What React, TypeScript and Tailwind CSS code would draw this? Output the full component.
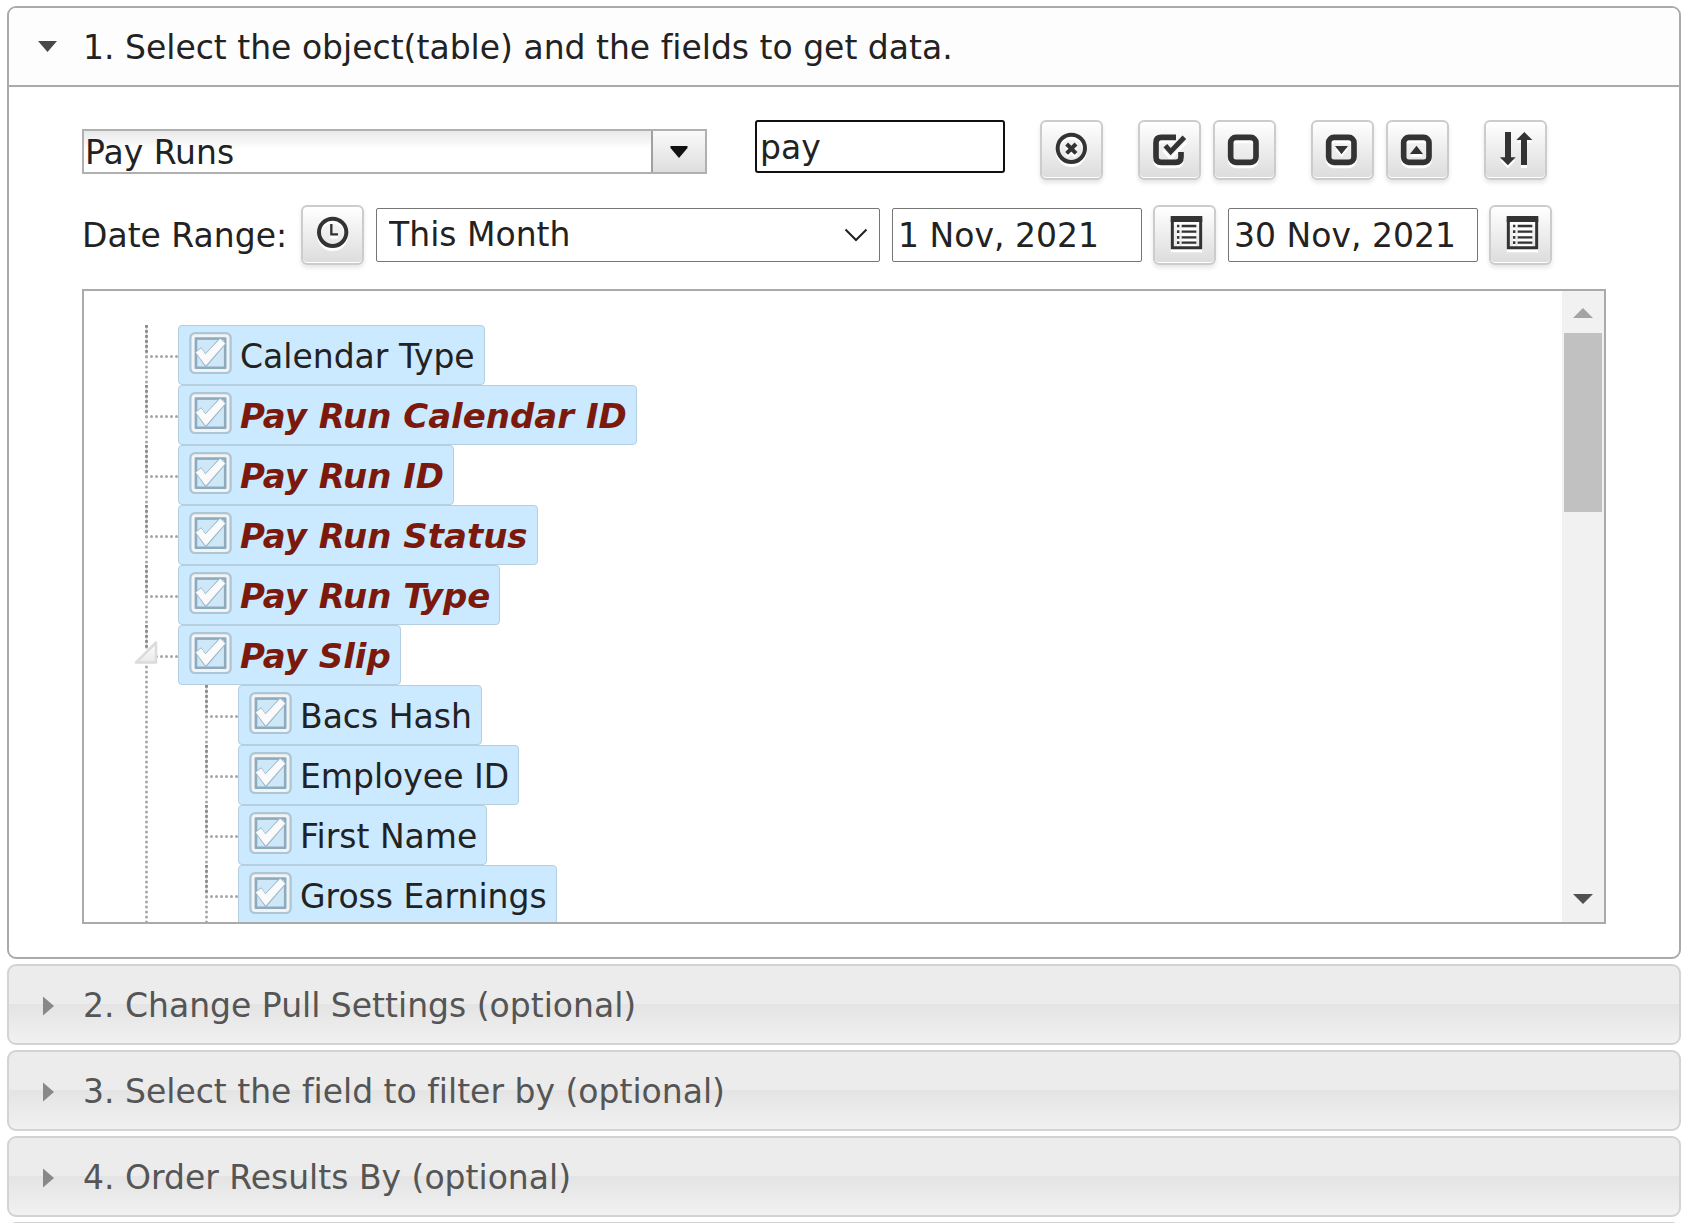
import { useState } from "react";
import type { ReactNode } from "react";

interface TreeNode {
  label: string;
  depth: 1 | 2;
  match?: boolean;
  open?: boolean;
}

const nodes: TreeNode[] = [
  { label: "Calendar Type", depth: 1 },
  { label: "Pay Run Calendar ID", depth: 1, match: true },
  { label: "Pay Run ID", depth: 1, match: true },
  { label: "Pay Run Status", depth: 1, match: true },
  { label: "Pay Run Type", depth: 1, match: true },
  { label: "Pay Slip", depth: 1, match: true, open: true },
  { label: "Bacs Hash", depth: 2 },
  { label: "Employee ID", depth: 2 },
  { label: "First Name", depth: 2 },
  { label: "Gross Earnings", depth: 2 },
];

const closedSections = [
  "2. Change Pull Settings (optional)",
  "3. Select the field to filter by (optional)",
  "4. Order Results By (optional)",
];

function IconButton({ label, children }: { label: string; children: ReactNode }) {
  return (
    <button
      type="button"
      aria-label={label}
      className="h-[60px] w-[63px] shrink-0 cursor-pointer rounded-md border-2 border-[#cccccc] bg-linear-to-b from-white to-[#dcdcdc] shadow-[0_3px_4px_rgba(0,0,0,0.1),inset_0_-1px_0_#fff]"
    >
      <svg
        viewBox="0 0 177 168"
        className="h-full w-full fill-none stroke-[#333333] drop-shadow-[0_3px_0_#ffffff]"
      >
        {children}
      </svg>
    </button>
  );
}

function SquareOutline() {
  return <rect x="47" y="46" width="76" height="75" rx="16" strokeWidth="17" />;
}

function CalendarIcon() {
  return (
    <>
      <path d="M52 36V122H137V36" strokeWidth="9" />
      <path d="M47 36H142" strokeWidth="18" />
      <path d="M66 57H73M66 74H73M66 91H73M66 107H73" strokeWidth="8" />
      <path d="M80 57H124M80 74H124M80 91H124M80 107H124" strokeWidth="7" />
    </>
  );
}

// Dotted guide lines drawn to the left of a tree node
function Connector({ depth, open }: { depth: 1 | 2; open?: boolean }) {
  const width = depth === 1 ? 44 : 104;
  const x = depth === 1 ? 12.5 : 72.5;
  return (
    <svg width={width} height="60" className="shrink-0 fill-none" aria-hidden="true">
      <g stroke="#a6a6a6" strokeWidth="3" strokeLinecap="round" strokeDasharray="0 5">
        {depth === 2 && <path d="M12.5 2V60" />}
        <path d={`M${x} 2V60`} />
        <path d={`M${x} 31.5H${width}`} />
        <path d={`M${x} 1V31`} stroke="#8a8a8a" />
      </g>
      {open && (
        <>
          <rect x="5" y="24" width="18" height="16" fill="#fff" stroke="none" />
          <path
            d="M22 17.5V37.5H2Z"
            fill="url(#toggle)"
            stroke="#dcdcdc"
            strokeWidth="2.5"
            strokeLinejoin="round"
          />
          <defs>
            <linearGradient id="toggle" x1="0" y1="0" x2="0" y2="1">
              <stop offset="0" stopColor="#fff" />
              <stop offset="1" stopColor="#e9e9e9" />
            </linearGradient>
          </defs>
        </>
      )}
    </svg>
  );
}

function CheckMark({ checked }: { checked: boolean }) {
  return (
    <svg width="43" height="43" viewBox="0 0 43 43" className="shrink-0" aria-hidden="true">
      <rect x="2" y="2.8" width="39" height="38.6" rx="4" fill="none" stroke="#aec5d3" strokeWidth="3.5" />
      <rect x="6.8" y="7.4" width="29.6" height="29.6" fill="#cfe8f8" stroke="#8dabbf" strokeWidth="3" />
      <rect x="4" y="4.8" width="35" height="34.6" rx="2.5" fill="none" stroke="#f1f3f5" strokeWidth="3" />
      {checked && (
        <>
          <path
            d="M7.2 21.5L12 17.5L16.3 24L31 8L36 12.5L16.8 35Z"
            fill="#9db8ca"
            stroke="#9db8ca"
            strokeWidth="2"
            strokeLinejoin="round"
          />
          <path
            d="M7.8 21.5L12 18.2L16.3 24.5L31.2 8.8L35.2 12.5L16.8 33.6Z"
            fill="#fafafa"
            stroke="#fafafa"
            strokeWidth="1.4"
            strokeLinejoin="round"
          />
        </>
      )}
    </svg>
  );
}

function TreeRow({ node }: { node: TreeNode }) {
  const [checked, setChecked] = useState(true);
  return (
    <li className="flex">
      <Connector depth={node.depth} open={node.open} />
      <label className="flex h-[60px] cursor-pointer items-start rounded-[4px] border border-[#b5cfde] bg-[#cbe9ff] pt-[5px] pr-[9px] pl-[10px]">
        <input
          type="checkbox"
          checked={checked}
          onChange={(e) => setChecked(e.target.checked)}
          className="sr-only"
        />
        <CheckMark checked={checked} />
        <span
          className={
            node.match
              ? "pl-2 text-[34px] leading-[50px] font-bold text-[#7b190d] italic"
              : "pl-2 leading-[52px]"
          }
        >
          {node.label}
        </span>
      </label>
    </li>
  );
}

export default function App() {
  const [table, setTable] = useState("Pay Runs");
  const [search, setSearch] = useState("pay");
  const [from, setFrom] = useState("1 Nov, 2021");
  const [to, setTo] = useState("30 Nov, 2021");

  return (
    <div className="flex h-screen flex-col gap-[5px] overflow-hidden bg-white pt-[6px] pr-[6px] pl-[7px] font-['DejaVu_Sans',sans-serif] text-[33px] leading-[40px] whitespace-nowrap text-[#222222] [font-variant-ligatures:none]">
      <section className="shrink-0 rounded-[9px] border-2 border-[#aaaaaa]">
        <h2>
          <button
            type="button"
            aria-expanded="true"
            className="flex h-[79px] w-full cursor-pointer items-center gap-[23px] rounded-t-[7px] border-b-2 border-[#aaaaaa] bg-[#fdfdfd] pt-0.5 pl-[27px]"
          >
            <svg width="24" height="24" viewBox="0 0 24 24" aria-hidden="true">
              <path d="M2 5H21L11.5 16Z" fill="#484848" />
            </svg>
            1. Select the object(table) and the fields to get data.
          </button>
        </h2>

        <div className="px-[73px] pt-[33px] pb-[33px]">
          <div className="flex items-start">
            <div className="mt-[9px] flex h-[45px] w-[625px] border-2 border-[#b0b0b0]">
              <input
                type="text"
                aria-label="Object"
                value={table}
                onChange={(e) => setTable(e.target.value)}
                className="min-w-0 flex-1 bg-linear-to-b from-[#e9e9e9] to-white to-45% pt-0.5 pl-px outline-none"
              />
              <button
                type="button"
                aria-label="Show all objects"
                className="flex w-[54px] cursor-pointer items-center justify-center border-l-2 border-[#a0a0a0] bg-linear-to-b from-[#fafafa] to-[#dedede]"
              >
                <svg width="18" height="12" viewBox="0 0 18 12" aria-hidden="true">
                  <path d="M0.5 0H17.5V2L9 12L0.5 2Z" fill="#111" />
                </svg>
              </button>
            </div>
            <input
              type="text"
              aria-label="Search fields"
              value={search}
              onChange={(e) => setSearch(e.target.value)}
              className="ml-12 h-[53px] w-[250px] rounded-[3px] border-2 border-[#101010] px-[3px] pt-0.5 outline-none"
            />
            <div className="ml-[35px] flex gap-[35px]">
              <IconButton label="Clear search">
                <circle cx="88" cy="79" r="41" strokeWidth="12" />
                <path d="M74 66L102 94M102 66L74 94" strokeWidth="12" />
              </IconButton>
              <div className="flex gap-3">
                <IconButton label="Check all">
                  <path
                    d="M108 46H64Q48 46 48 62V105Q48 121 64 121H107Q123 121 123 105V90"
                    strokeWidth="17"
                  />
                  <path d="M76 71L92 89L133 46" stroke="#f2f2f2" strokeWidth="24" />
                  <path d="M76 71L92 89L133 46" strokeWidth="15" />
                </IconButton>
                <IconButton label="Uncheck all">
                  <SquareOutline />
                </IconButton>
              </div>
              <div className="flex gap-3">
                <IconButton label="Expand all">
                  <SquareOutline />
                  <path d="M66 72H105L85.5 97Z" fill="#333" stroke="none" />
                </IconButton>
                <IconButton label="Collapse all">
                  <SquareOutline />
                  <path d="M66 96H105L85.5 71Z" fill="#333" stroke="none" />
                </IconButton>
              </div>
              <IconButton label="Sort">
                <path
                  d="M57 30H75V106H89L65.5 130L42 106H57ZM105 129V54H91L115 30L139 54H123V129Z"
                  fill="#333"
                  stroke="none"
                />
              </IconButton>
            </div>
          </div>

          <div className="mt-[25px] flex items-center gap-3">
            <label htmlFor="range" className="pt-px pr-0.5">
              Date Range:
            </label>
            <IconButton label="Use current time">
              <circle cx="89" cy="76" r="41" strokeWidth="12" />
              <path d="M85 51V82H105" strokeWidth="7" />
            </IconButton>
            <div className="relative">
              <select
                id="range"
                defaultValue="This Month"
                className="block h-[54px] w-[504px] appearance-none rounded-[2px] border border-[#767676] bg-white pl-3 outline-none"
              >
                <option>This Month</option>
              </select>
              <svg
                width="24"
                height="14"
                viewBox="0 0 24 14"
                className="pointer-events-none absolute top-5 right-3 fill-none"
                aria-hidden="true"
              >
                <path d="M1.5 1.5L12 12L22.5 1.5" stroke="#222" strokeWidth="2" />
              </svg>
            </div>
            <div className="flex items-center gap-[11px]">
              <input
                type="text"
                aria-label="From date"
                value={from}
                onChange={(e) => setFrom(e.target.value)}
                className="h-[54px] w-[250px] rounded-[2px] border border-[#767676] px-[5px] outline-none"
              />
              <IconButton label="Pick from date">
                <CalendarIcon />
              </IconButton>
            </div>
            <div className="flex items-center gap-[11px]">
              <input
                type="text"
                aria-label="To date"
                value={to}
                onChange={(e) => setTo(e.target.value)}
                className="h-[54px] w-[250px] rounded-[2px] border border-[#767676] px-[5px] outline-none"
              />
              <IconButton label="Pick to date">
                <CalendarIcon />
              </IconButton>
            </div>
          </div>

          <div className="mt-6 flex h-[635px] border-2 border-[#aaaaaa]">
            <ul className="flex-1 overflow-hidden pt-[34px] pl-[50px]">
              {nodes.map((node) => (
                <TreeRow key={node.label} node={node} />
              ))}
            </ul>
            <div className="flex w-[42px] flex-col items-center bg-[#f1f1f1]">
              <button type="button" aria-label="Scroll up" className="flex h-[42px] w-full items-center justify-center pt-0.5">
                <svg width="20" height="10" viewBox="0 0 20 10" aria-hidden="true">
                  <path d="M0 10L10 0L20 10Z" fill="#a3a3a3" />
                </svg>
              </button>
              <div className="h-[179px] w-[38px] bg-[#c1c1c1]" />
              <div className="flex-1" />
              <button type="button" aria-label="Scroll down" className="flex h-[46px] w-full items-center justify-center">
                <svg width="20" height="10" viewBox="0 0 20 10" aria-hidden="true">
                  <path d="M0 0H20L10 10Z" fill="#505050" />
                </svg>
              </button>
            </div>
          </div>
        </div>
      </section>

      {closedSections.map((title) => (
        <h2 key={title} className="shrink-0">
          <button
            type="button"
            aria-expanded="false"
            className="flex h-[81px] w-full cursor-pointer items-center gap-[23px] rounded-[9px] border-2 border-[#d3d3d3] bg-linear-to-b from-[#ececec] from-50% via-[#e4e4e4] via-50% to-[#f1f1f1] pt-[3px] pl-[27px] text-[#555555]"
          >
            <svg width="24" height="24" viewBox="0 0 24 24" aria-hidden="true">
              <path d="M7 2.5L18 12L7 21.5Z" fill="#888" />
            </svg>
            {title}
          </button>
        </h2>
      ))}
      <div className="h-[81px] shrink-0 rounded-[9px] border-2 border-[#d3d3d3] bg-[#ececec]" />
    </div>
  );
}
